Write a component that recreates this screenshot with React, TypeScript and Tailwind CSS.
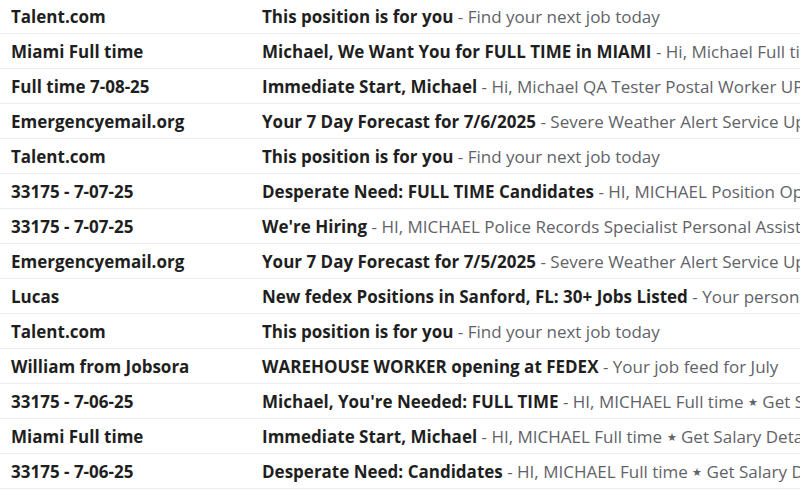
import React from "react";

const rows: [string, string, string][] = [
  ["Talent.com", "This position is for you", "Find your next job today"],
  ["Miami Full time", "Michael, We Want You for FULL TIME in MIAMI", "Hi, Michael Full time ★ Get Salary Details"],
  ["Full time 7-08-25", "Immediate Start, Michael", "Hi, Michael QA Tester Postal Worker UPS Driver"],
  ["Emergencyemail.org", "Your 7 Day Forecast for 7/6/2025", "Severe Weather Alert Service Update"],
  ["Talent.com", "This position is for you", "Find your next job today"],
  ["33175 - 7-07-25", "Desperate Need: FULL TIME Candidates", "HI, MICHAEL Position Open"],
  ["33175 - 7-07-25", "We're Hiring", "HI, MICHAEL Police Records Specialist Personal Assistant"],
  ["Emergencyemail.org", "Your 7 Day Forecast for 7/5/2025", "Severe Weather Alert Service Update"],
  ["Lucas", "New fedex Positions in Sanford, FL: 30+ Jobs Listed", "Your personalized job list"],
  ["Talent.com", "This position is for you", "Find your next job today"],
  ["William from Jobsora", "WAREHOUSE WORKER opening at FEDEX", "Your job feed for July"],
  ["33175 - 7-06-25", "Michael, You're Needed: FULL TIME", "HI, MICHAEL Full time ★ Get Salary Details"],
  ["Miami Full time", "Immediate Start, Michael", "HI, MICHAEL Full time ★ Get Salary Details"],
  ["33175 - 7-06-25", "Desperate Need: Candidates", "HI, MICHAEL Full time ★ Get Salary Details"],
];

function Snip({ text }: { text: string }) {
  const parts = text.split("★");
  return (
    <>
      {parts.map((p, i) => (
        <React.Fragment key={i}>
          {i > 0 && <span className="text-[11px] align-[2px]">★</span>}
          {p}
        </React.Fragment>
      ))}
    </>
  );
}

export default function App() {
  return (
    <div className="w-[800px] h-[495px] overflow-hidden bg-white" style={{ fontFamily: "'Open Sans', sans-serif" }}>
      <div className="-mt-px">
        {rows.map(([s, subj, snip], i) => (
          <div key={i} className="flex items-center h-[35px] border-b border-[#ececec] whitespace-nowrap overflow-hidden text-[17px] leading-none pt-px">
            <div className="w-[262px] shrink-0 pl-[11px] font-bold text-[#1f1f1f]">{s}</div>
            <div className="shrink-0">
              <span className="font-bold text-[#1f1f1f]">{subj}</span>
              <span className="text-[#5f6368]"> - <Snip text={snip} /></span>
            </div>
          </div>
        ))}
      </div>
    </div>
  );
}
